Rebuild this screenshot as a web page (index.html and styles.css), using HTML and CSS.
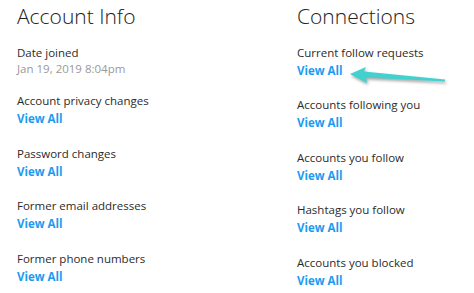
FILE: index.html
```html
<!DOCTYPE html>
<html lang="en">
  <head>
    <meta charset="UTF-8" />
    <meta name="viewport" content="width=device-width, initial-scale=1.0" />
    <title>Account Data</title>
    <link rel="stylesheet" href="styles.css">
  </head>
  <body>
    <div class="page">
      <section class="column">
        <h2>Account Info</h2>
        <div class="item">
          <div class="label">Date joined</div>
          <div class="value">Jan 19, 2019 8:04pm</div>
        </div>
        <div class="item">
          <div class="label">Account privacy changes</div>
          <a class="view-all" href="#">View All</a>
        </div>
        <div class="item">
          <div class="label">Password changes</div>
          <a class="view-all" href="#">View All</a>
        </div>
        <div class="item">
          <div class="label">Former email addresses</div>
          <a class="view-all" href="#">View All</a>
        </div>
        <div class="item">
          <div class="label">Former phone numbers</div>
          <a class="view-all" href="#">View All</a>
        </div>
      </section>

      <section class="column">
        <h2>Connections</h2>
        <div class="item">
          <div class="label">Current follow requests</div>
          <a class="view-all" href="#">View All</a>
        </div>
        <div class="item">
          <div class="label">Accounts following you</div>
          <a class="view-all" href="#">View All</a>
        </div>
        <div class="item">
          <div class="label">Accounts you follow</div>
          <a class="view-all" href="#">View All</a>
        </div>
        <div class="item">
          <div class="label">Hashtags you follow</div>
          <a class="view-all" href="#">View All</a>
        </div>
        <div class="item">
          <div class="label">Accounts you blocked</div>
          <a class="view-all" href="#">View All</a>
        </div>
      </section>

      <svg class="pointer" width="110" height="30" viewBox="345 60 110 30">
        <polygon points="350,74 366,67 364,71.5 445,79.5 445,81.5 366,77.5 367,83" />
      </svg>
    </div>
  </body>
</html>
```

FILE: styles.css
```css
body {
  margin: 0;
  background-color: white;
  font-family: "Open Sans", "Noto Sans", sans-serif;
  color: #2b2b2b;
}
.page {
  position: relative;
  display: grid;
  grid-template-columns: 280px 1fr;
  padding: 0 17px;
}
.column h2 {
  margin: 0 0 14px;
  padding-top: 1.5px;
  font-size: 21px;
  font-weight: 300;
  line-height: 28px;
  color: #222222;
}
.item {
  margin-bottom: 16.5px;
}
.label {
  font-size: 11.5px;
  line-height: 17px;
  color: #2b2b2b;
}
.value {
  font-size: 11.5px;
  line-height: 15px;
  color: #999999;
}
.view-all {
  display: block;
  font-size: 11.5px;
  font-weight: 700;
  line-height: 19px;
  color: #1b9bf0;
  text-decoration: none;
}
.pointer {
  position: absolute;
  left: 345px;
  top: 60px;
  overflow: visible;
}
.pointer polygon {
  fill: #41d2d0;
  filter: drop-shadow(1px 2px 1.5px rgba(0, 0, 0, 0.35));
}
```
